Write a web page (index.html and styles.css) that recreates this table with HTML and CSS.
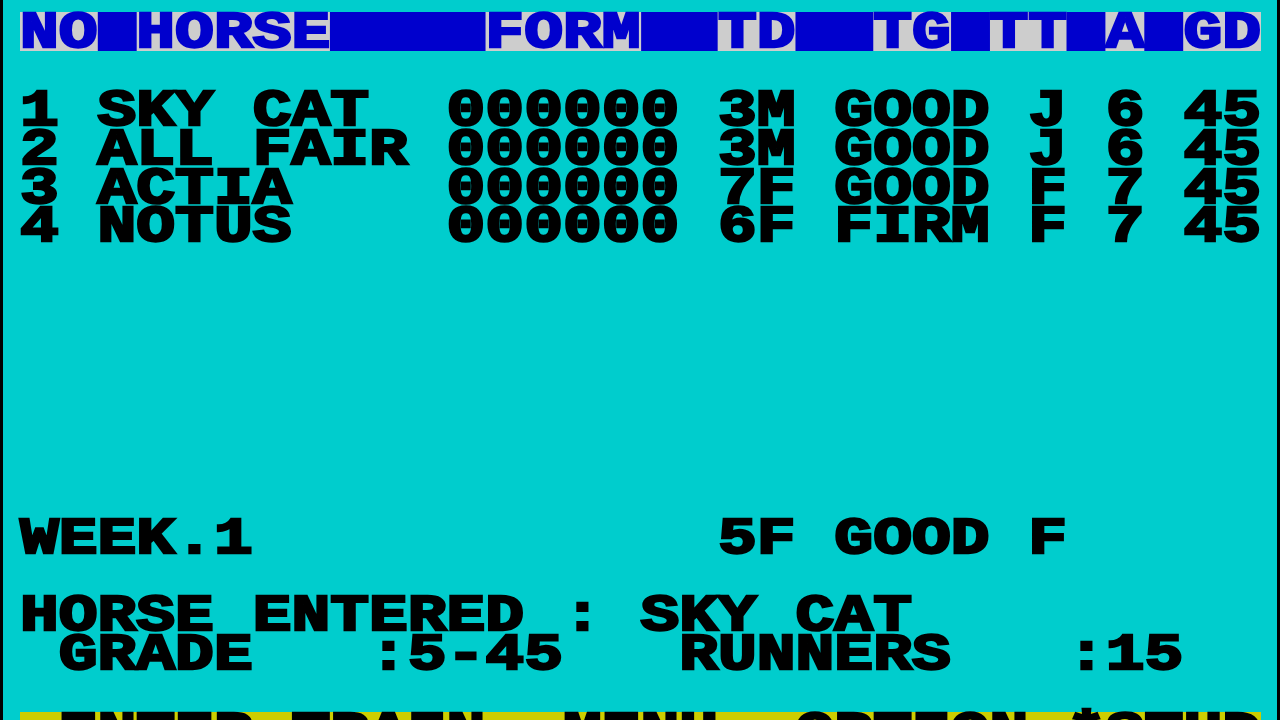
FILE: index.html
```html
<!DOCTYPE html>
<html>
<head>
<meta charset="utf-8">
<link rel="stylesheet" href="styles.css">
</head>
<body>
<div class="screen">
  <div class="paper">
    <div class="row hdr"><span class="k">NO</span> <span class="k">HORSE</span>    <span class="k">FORM</span>  <span class="k">TD</span>  <span class="k">TG</span> <span class="k">TT</span> <span class="k">A</span> <span class="k">GD</span></div>
    <div class="blank"></div>
    <div class="row">1 SKY CAT  000000 3M GOOD J 6 45</div>
    <div class="row">2 ALL FAIR 000000 3M GOOD J 6 45</div>
    <div class="row">3 ACTIA    000000 7F GOOD F 7 45</div>
    <div class="row">4 NOTUS    000000 6F FIRM F 7 45</div>
    <div class="blank b7"></div>
    <div class="row">WEEK.1            5F GOOD F</div>
    <div class="blank"></div>
    <div class="row">HORSE ENTERED : SKY CAT</div>
    <div class="row"> GRADE   :5-45   RUNNERS   :15</div>
    <div class="blank"></div>
    <div class="row menu"> ENTER TRAIN  MENU  OPTION *STUD</div>
  </div>
</div>
</body>
</html>
```

FILE: styles.css
```css
html, body {
  margin: 0;
  padding: 0;
  background: #000;
  height: 720px;
  overflow: hidden;
}

.screen {
  margin: 0 3px;
  height: 720px;
  box-sizing: border-box;
  padding: 12px 0 0 17px;
  background: #00cdcd;
  overflow: hidden;
}

.paper {
  width: 1241px;
}

.row {
  height: 38.9px;
  width: 989px;
  white-space: pre;
  font-family: "Liberation Mono", "DejaVu Sans Mono", monospace;
  font-weight: bold;
  font-size: 51.5px;
  line-height: 42.9px;
  color: #000;
  -webkit-text-stroke: 2.4px currentColor;
  transform: scaleX(1.2548);
  transform-origin: 0 0;
}

.blank {
  height: 38.9px;
}

.blank.b7 {
  height: 272.3px;
}

.hdr {
  background: #0000cd;
  color: #0000cd;
}

.hdr .k {
  display: inline-block;
  height: 38.9px;
  vertical-align: top;
  background: #cdcdcd;
}

.menu {
  background: #cdcd00;
}
```
